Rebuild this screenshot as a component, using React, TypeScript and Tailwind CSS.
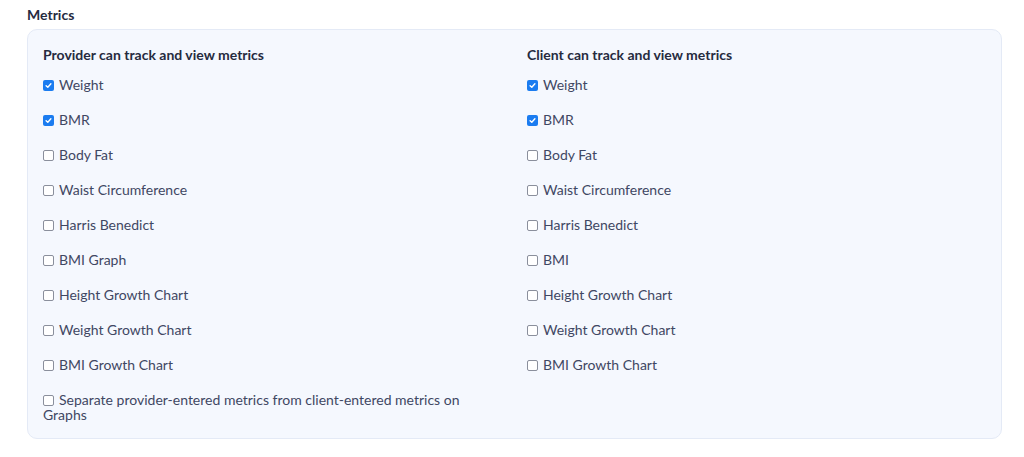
const provider = [
  { label: 'Weight', checked: true },
  { label: 'BMR', checked: true },
  { label: 'Body Fat', checked: false },
  { label: 'Waist Circumference', checked: false },
  { label: 'Harris Benedict', checked: false },
  { label: 'BMI Graph', checked: false },
  { label: 'Height Growth Chart', checked: false },
  { label: 'Weight Growth Chart', checked: false },
  { label: 'BMI Growth Chart', checked: false },
  { label: 'Separate provider-entered metrics from client-entered metrics on Graphs', checked: false },
];

const client = [
  { label: 'Weight', checked: true },
  { label: 'BMR', checked: true },
  { label: 'Body Fat', checked: false },
  { label: 'Waist Circumference', checked: false },
  { label: 'Harris Benedict', checked: false },
  { label: 'BMI', checked: false },
  { label: 'Height Growth Chart', checked: false },
  { label: 'Weight Growth Chart', checked: false },
  { label: 'BMI Growth Chart', checked: false },
];

function Box({ checked }: { checked: boolean }) {
  if (checked) {
    return (
      <span className="mr-[5px] inline-block h-[11px] w-[11px] rounded-[2px] bg-[#1b7cf0] align-[-1px]">
        <svg className="block" width="11" height="11" viewBox="0 0 11 11" fill="none">
          <path d="M3.1 5.7 L4.8 7.3 L7.9 3.8" stroke="white" strokeWidth="1.4" strokeLinecap="round" strokeLinejoin="round" />
        </svg>
      </span>
    );
  }
  return <span className="mr-[5px] inline-block h-[11px] w-[11px] rounded-[2px] border border-[#8a8f9c] bg-white align-[-1px]" />;
}

function Column({ title, items }: { title: string; items: { label: string; checked: boolean }[] }) {
  return (
    <div>
      <h3 className="text-[14px] leading-[18px] font-bold text-[#262b3f]">{title}</h3>
      <div className="mt-[13px] flex flex-col gap-[20px]">
        {items.map((it) => (
          <label key={it.label} className="block pr-[44px] text-[14px] leading-[15px] text-[#3f4763]">
            <Box checked={it.checked} />
            {it.label}
          </label>
        ))}
      </div>
    </div>
  );
}

export default function App() {
  return (
    <div className="h-[457px] w-[1024px] bg-white px-[27px] pt-[7px]" style={{ fontFamily: 'Lato, "Noto Sans", sans-serif' }}>
      <div className="text-[14px] leading-[16px] font-bold text-[#262b3f]">Metrics</div>
      <div className="mt-[6px] w-[975px] rounded-[10px] border border-[#e4eaf6] bg-[#f5f8fe] pt-[16px] pb-[16px] pl-[15px]">
        <div className="grid grid-cols-[484px_1fr]">
          <Column title="Provider can track and view metrics" items={provider} />
          <Column title="Client can track and view metrics" items={client} />
        </div>
      </div>
    </div>
  );
}
